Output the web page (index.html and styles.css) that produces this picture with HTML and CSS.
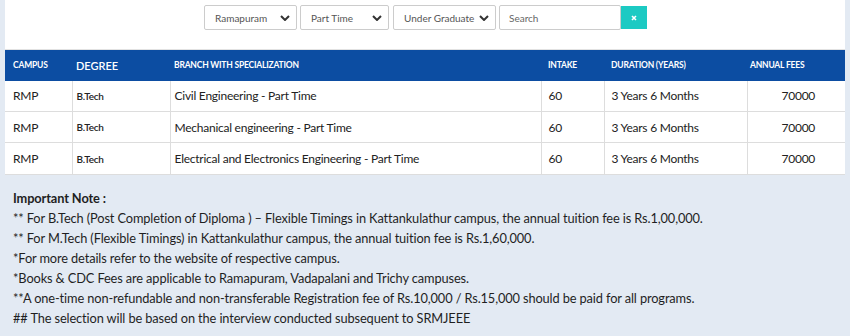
FILE: index.html
```html
<!DOCTYPE html>
<html>
<head>
<meta charset="utf-8">
<link rel="stylesheet" href="styles.css">
</head>
<body>
<div class="panel">
  <div class="filters">
    <div class="select w1"><span>Ramapuram</span><svg class="chev" viewBox="0 0 10 6" width="10" height="6"><path d="M1 1 L5 5 L9 1" fill="none" stroke="#333" stroke-width="2"/></svg></div>
    <div class="select w2"><span>Part Time</span><svg class="chev" viewBox="0 0 10 6" width="10" height="6"><path d="M1 1 L5 5 L9 1" fill="none" stroke="#333" stroke-width="2"/></svg></div>
    <div class="select w3"><span>Under Graduate</span><svg class="chev" viewBox="0 0 10 6" width="10" height="6"><path d="M1 1 L5 5 L9 1" fill="none" stroke="#333" stroke-width="2"/></svg></div>
    <div class="search-group">
      <div class="search">Search</div>
      <div class="clear-btn"><svg viewBox="0 0 6 6" width="6" height="6"><path d="M1 1 L5 5 M5 1 L1 5" stroke="#fff" stroke-width="1.6"/></svg></div>
    </div>
  </div>
  <table class="fees">
    <thead>
      <tr>
        <th class="c1">CAMPUS</th>
        <th class="c2 deg">DEGREE</th>
        <th class="c3">BRANCH WITH SPECIALIZATION</th>
        <th class="c4">INTAKE</th>
        <th class="c5">DURATION (YEARS)</th>
        <th class="c6">ANNUAL FEES</th>
      </tr>
    </thead>
    <tbody>
      <tr><td class="c1">RMP</td><td class="c2 small">B.Tech</td><td class="c3">Civil Engineering - Part Time</td><td class="c4">60</td><td class="c5">3 Years 6 Months</td><td class="c6 fee">70000</td></tr>
      <tr><td class="c1">RMP</td><td class="c2 small">B.Tech</td><td class="c3">Mechanical engineering - Part Time</td><td class="c4">60</td><td class="c5">3 Years 6 Months</td><td class="c6 fee">70000</td></tr>
      <tr><td class="c1">RMP</td><td class="c2 small">B.Tech</td><td class="c3">Electrical and Electronics Engineering - Part Time</td><td class="c4">60</td><td class="c5">3 Years 6 Months</td><td class="c6 fee">70000</td></tr>
    </tbody>
  </table>
</div>
<div class="notes">
  <p class="title">Important Note :</p>
  <p>** For B.Tech (Post Completion of Diploma ) – Flexible Timings in Kattankulathur campus, the annual tuition fee is Rs.1,00,000.</p>
  <p>** For M.Tech (Flexible Timings) in Kattankulathur campus, the annual tuition fee is Rs.1,60,000.</p>
  <p>*For more details refer to the website of respective campus.</p>
  <p>*Books &amp; CDC Fees are applicable to Ramapuram, Vadapalani and Trichy campuses.</p>
  <p>**A one-time non-refundable and non-transferable Registration fee of Rs.10,000 / Rs.15,000 should be paid for all programs.</p>
  <p>## The selection will be based on the interview conducted subsequent to SRMJEEE</p>
</div>
</body>
</html>
```

FILE: styles.css
```css
* { box-sizing: border-box; }
html, body { margin: 0; padding: 0; }
body {
  background: #e3eaf3;
  font-family: Lato, "Liberation Sans", sans-serif;
  color: #222;
  width: 850px;
  height: 336px;
  overflow: hidden;
}
.panel {
  margin: 0 5px;
  background: #fff;
}
.filters {
  display: flex;
  justify-content: center;
  align-items: flex-start;
  gap: 3px;
  padding: 5px 0 0 1px;
  height: 49px;
}
.select {
  height: 25px;
  border: 1px solid #cccccc;
  border-radius: 2px;
  display: flex;
  align-items: center;
  justify-content: space-between;
  padding: 0 6px 0 10px;
  font-size: 10px;
  color: #555;
  background: #fff;
}
.w1 { width: 93px; }
.w2 { width: 89px; }
.w3 { width: 103px; margin-left: 1px; }
.chev { display: block; }
.search-group { display: flex; align-items: flex-start; }
.search {
  width: 122px;
  height: 25px;
  border: 1px solid #cccccc;
  border-radius: 2px;
  font-size: 10px;
  color: #666;
  display: flex;
  align-items: center;
  padding-left: 9px;
}
.clear-btn {
  width: 26px;
  height: 23px;
  margin-top: 1px;
  background: #1ccac3;
  display: flex;
  align-items: center;
  justify-content: center;
}
.clear-btn svg { display: block; }
.fees {
  width: 840px;
  border-collapse: collapse;
  border-top: 1px solid #e2e2e2;
}
.fees th {
  background: #0c4da2;
  color: #fff;
  font-size: 8.5px;
  letter-spacing: -0.2px;
  font-weight: 700;
  text-align: left;
  height: 31px;
  padding: 0;
  vertical-align: middle;
}
.fees th.deg { font-size: 11px; font-weight: 600; letter-spacing: 0; }
.fees td {
  height: 31px;
  font-size: 12px;
  letter-spacing: -0.25px;
  color: #222;
  border: 1px solid #dddddd;
  border-top: none;
  padding: 0;
  vertical-align: middle;
}
.fees tbody tr:last-child td { height: 32px; }
.fees td:first-child { border-left: none; }
.fees td:last-child { border-right: none; }
.c1 { width: 67px; padding-left: 8px !important; }
.c2 { width: 98px; padding-left: 4px !important; }
.c3 { width: 371px; padding-left: 4px !important; }
.c4 { width: 63px; padding-left: 7px !important; }
.c5 { width: 143px; padding-left: 7px !important; }
.c6 { width: 98px; padding-left: 3px !important; }
.fees td.small { font-size: 10px; font-weight: 600; }
.fees td.fee { padding-left: 34px !important; }
.notes {
  padding: 13px 0 0 13px;
  font-size: 12.8px;
  letter-spacing: -0.12px;
  line-height: 20px;
  color: #1f1f1f;
}
.notes p { margin: 0; }
.notes .title { font-weight: 700; }
```
